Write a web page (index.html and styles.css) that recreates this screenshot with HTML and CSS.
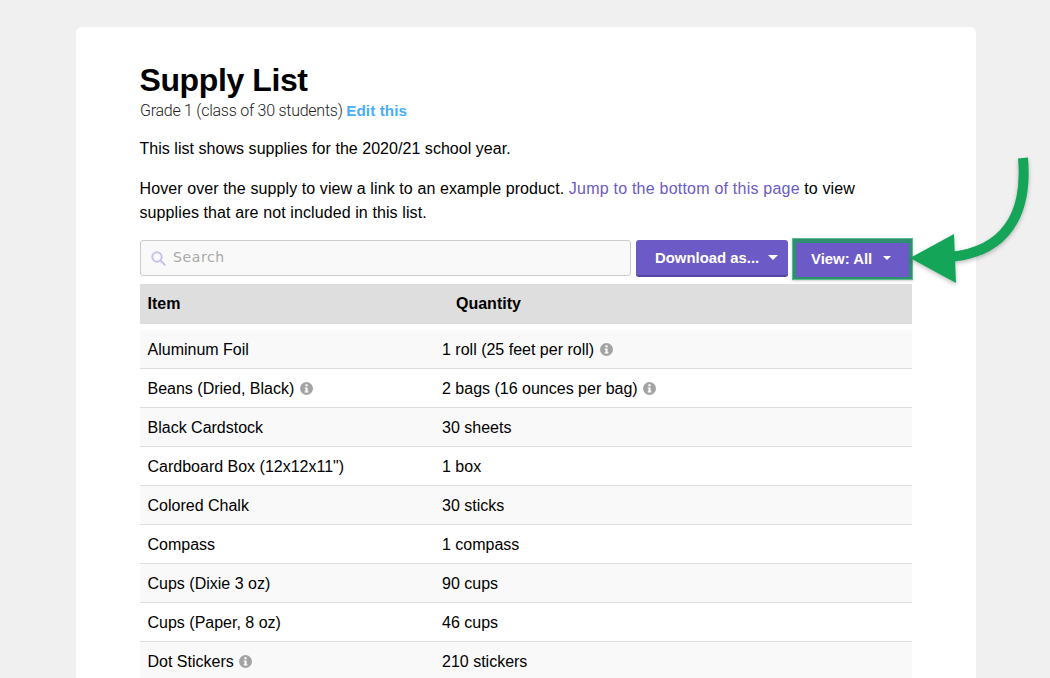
FILE: index.html
```html
<!DOCTYPE html>
<html lang="en">
<head>
<meta charset="utf-8">
<title>Supply List</title>
<link rel="stylesheet" href="styles.css">
</head>
<body>
<svg width="0" height="0" class="defs"><defs>
<symbol id="info" viewBox="0 0 13 13"><circle cx="6.5" cy="6.5" r="6.5" fill="#a3a3a3"/><rect x="5.4" y="2.3" width="2.2" height="2" fill="#fff"/><path d="M4.7 5.4h2.9v3.9h.8v1.2H4.7V9.3h.8V6.6h-.8z" fill="#fff"/></symbol>
</defs></svg>
<main class="card">
  <h1 class="title">Supply List</h1>
  <p class="subtitle">Grade 1 (class of 30 students) <a class="edit" href="#">Edit this</a></p>
  <p class="para para-short">This list shows supplies for the 2020/21 school year.</p>
  <p class="para para-long">Hover over the supply to view a link to an example product. <a class="jump" href="#">Jump to the bottom of this page</a> to view supplies that are not included in this list.</p>
  <div class="toolbar">
    <div class="search">
      <svg class="search-icon" width="15" height="15" viewBox="0 0 15 15"><circle cx="6" cy="6" r="4.7" fill="none" stroke="#c9c3ea" stroke-width="2"/><path d="M9.5 9.5l4.2 4.2" stroke="#c9c3ea" stroke-width="2.2" stroke-linecap="round"/></svg>
      <span class="search-text">Search</span>
    </div>
    <button class="btn btn-download">Download as...<span class="caret"></span></button>
    <div class="view-wrap"><button class="btn btn-view">View: All<span class="caret"></span></button></div>
  </div>
  <div class="thead"><div class="th th-item">Item</div><div class="th th-qty">Quantity</div></div>
  <div class="tbody">
    <div class="row"><div class="c1">Aluminum Foil</div><div class="c2">1 roll (25 feet per roll) <svg class="info"><use href="#info"/></svg></div></div>
    <div class="row"><div class="c1">Beans (Dried, Black) <svg class="info"><use href="#info"/></svg></div><div class="c2">2 bags (16 ounces per bag) <svg class="info"><use href="#info"/></svg></div></div>
    <div class="row"><div class="c1">Black Cardstock</div><div class="c2">30 sheets</div></div>
    <div class="row"><div class="c1">Cardboard Box (12x12x11")</div><div class="c2">1 box</div></div>
    <div class="row"><div class="c1">Colored Chalk</div><div class="c2">30 sticks</div></div>
    <div class="row"><div class="c1">Compass</div><div class="c2">1 compass</div></div>
    <div class="row"><div class="c1">Cups (Dixie 3 oz)</div><div class="c2">90 cups</div></div>
    <div class="row"><div class="c1">Cups (Paper, 8 oz)</div><div class="c2">46 cups</div></div>
    <div class="row"><div class="c1">Dot Stickers <svg class="info"><use href="#info"/></svg></div><div class="c2">210 stickers</div></div>
  </div>
</main>
<svg class="arrow" width="130" height="135" viewBox="0 0 130 135">
  <path d="M118 1C123 58 100 95 45 100" fill="none" stroke="#14a558" stroke-width="10"/>
  <path d="M5 101L49 77L51 126Z" fill="#14a558"/>
</svg>
</body>
</html>
```
FILE: styles.css
```css
* { box-sizing: border-box; }
html, body { margin: 0; height: 678px; overflow: hidden; }
body { background: #f0f0f0; font-family: "Liberation Sans", Arial, sans-serif; font-size: 16px; color: #000; position: relative; padding: 27px 74px 0 76px; }
.defs { position: absolute; }
.card { background: #fff; border-radius: 6px 6px 0 0; height: 651px; padding: 35px 64px 0; overflow: hidden; }
.title { margin: 0; font-size: 32px; line-height: 36px; font-weight: 700; letter-spacing: -0.4px; margin-left: -0.5px; }
.subtitle { margin: 3px 0 0; line-height: 20px; font-family: Roboto, "Liberation Sans", sans-serif; font-weight: 300; font-size: 16px; letter-spacing: -0.26px; color: #222; }
.edit { font-family: "Liberation Sans", Arial, sans-serif; font-size: 15.2px; color: #45aefc; font-weight: 700; text-decoration: none; letter-spacing: 0.1px; }
.para { margin: 16px 0 0; line-height: 24px; width: 772px; letter-spacing: 0.1px; margin-left: -0.5px; }
.para-short { letter-spacing: 0.04px; }
.para-long { margin-top: 16px; padding-right: 40px; }
.jump { color: #6c5ac7; text-decoration: none; letter-spacing: 0.22px; }
.toolbar { display: flex; align-items: flex-start; width: 772px; margin-top: 15px; height: 44px; }
.search { flex: none; width: 491px; height: 36px; border: 1px solid #ccc; border-radius: 3px; background: #f9f9f9; display: flex; align-items: center; padding-left: 10px; }
.search-icon { flex: none; }
.search-text { margin-left: 7px; margin-top: -2px; font-family: "DejaVu Sans", sans-serif; font-size: 14px; letter-spacing: 0.6px; color: #a9a9a9; }
.btn { border: 0; color: #fff; background: #6c5ac7; font: 700 14.9px "Liberation Sans", Arial, sans-serif; display: flex; align-items: center; padding: 0; }
.btn-download { flex: none; width: 152px; height: 37px; margin-left: 5px; border-radius: 3px; border-bottom: 2px solid #5647a3; padding: 1px 0 0 19px; }
.view-wrap { width: 121px; height: 42px; margin: -2px 0 0 4px; flex: none; border: 1px solid #5cb98a; box-shadow: 0 1px 2px rgba(0,0,0,.2); background: #2e8f72; padding: 4px 3px 2px 3px; }
.btn-view { width: 100%; height: 100%; padding: 0 0 3px 15px; }
.caret { width: 0; height: 0; border-left: 5px solid transparent; border-right: 5px solid transparent; border-top: 5px solid #fff; margin-left: 9px; margin-top: -2px; }
.btn-view .caret { margin-left: 11px; border-left-width: 4.5px; border-right-width: 4.5px; border-top-width: 4px; }
.thead { display: flex; width: 772px; height: 40px; background: #dedede; align-items: center; font-weight: 700; }
.th-item { width: 316px; padding-left: 7.5px; }
.tbody { width: 772px; margin-top: 6px; }
.row { display: flex; height: 39px; align-items: center; border-bottom: 1px solid #ddd; padding-top: 1px; }
.row:nth-child(odd) { background: #f9f9f9; }
.c1 { width: 302px; padding-left: 7.5px; }
.info { width: 13px; height: 13px; vertical-align: -1px; margin-left: 1px; }
.arrow { position: absolute; left: 905px; top: 157px; filter: drop-shadow(0 2px 2px rgba(0,0,0,.25)); }
```
